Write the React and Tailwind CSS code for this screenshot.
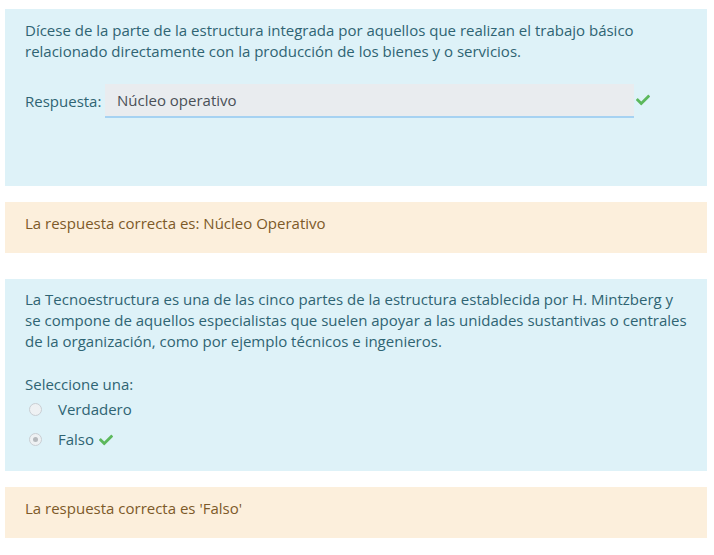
import React from 'react';
import { FaCheck } from 'react-icons/fa';

const Check = ({ className = '' }) => (
  <FaCheck className={`text-[#5cb85c] ${className}`} size={14} />
);

const Radio = ({ checked }) => (
  <span className="w-[13px] h-[13px] rounded-full border border-[#c9ced3] bg-[#eef1f3] flex items-center justify-center shrink-0">
    {checked && <span className="w-[5px] h-[5px] rounded-full bg-[#b5b9bd]" />}
  </span>
);

export default function App() {
  return (
    <div
      className="pt-[9px] pb-4 bg-white text-[15px] leading-[21px]"
      style={{ fontFamily: '"Open Sans", "Noto Sans", sans-serif' }}
    >
      {/* pregunta 1 */}
      <div className="ml-[5px] w-[702px] bg-[#def2f8] text-[#2f6473] px-5 pt-[11px] pb-[68px]">
        <p>
          Dícese de la parte de la estructura integrada por aquellos que realizan el trabajo básico
          <br />
          relacionado directamente con la producción de los bienes y o servicios.
        </p>
        <div className="mt-[22px] flex items-center">
          <span className="w-[80px] shrink-0">Respuesta:</span>
          <div className="w-[529px] h-[34px] bg-[#e9ecef] border-b-2 border-[#a6d2f2] pl-3 flex items-center text-[#495057]">
            Núcleo operativo
          </div>
          <Check className="ml-[2px] -mt-[2px]" />
        </div>
      </div>

      <div className="ml-[5px] w-[702px] mt-4 h-[51px] bg-[#fcefdc] text-[#7d5a29] px-5 pt-[11px]">
        La respuesta correcta es: Núcleo Operativo
      </div>

      {/* pregunta 2 */}
      <div className="ml-[5px] w-[702px] mt-[26px] bg-[#def2f8] text-[#2f6473] px-5 pt-[10px] pb-[21px]">
        <p>
          La Tecnoestructura es una de las cinco partes de la estructura establecida por H. Mintzberg y
          <br />
          se compone de aquellos especialistas que suelen apoyar a las unidades sustantivas o centrales
          <br />
          de la organización, como por ejemplo técnicos e ingenieros.
        </p>
        <div className="mt-[22px]">Seleccione una:</div>
        <div className="mt-[4px] flex flex-col gap-[9px]">
          <label className="flex items-center pl-[4px] h-[21px]">
            <Radio />
            <span className="ml-4">Verdadero</span>
          </label>
          <label className="flex items-center pl-[4px] h-[21px]">
            <Radio checked />
            <span className="ml-4">Falso</span>
            <Check className="ml-[5px]" />
          </label>
        </div>
      </div>

      <div className="ml-[5px] w-[702px] mt-4 h-[51px] bg-[#fcefdc] text-[#7d5a29] px-5 pt-[11px]">
        La respuesta correcta es 'Falso'
      </div>
    </div>
  );
}
